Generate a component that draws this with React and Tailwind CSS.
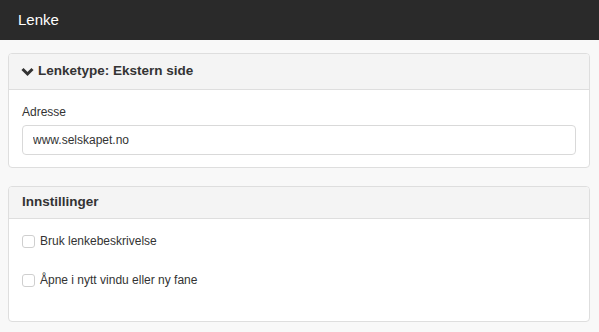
import React from "react";

export default function App() {
  return (
    <div className="min-h-[332px] bg-[#f8f8f8] text-[#333] font-['Liberation_Sans',Arial,sans-serif]">
      {/* Top bar */}
      <div className="h-[40px] bg-[#2a2a2a] flex items-center px-[18px]">
        <span className="text-white text-[15px]">Lenke</span>
      </div>

      <div className="px-[8px] pt-[13px] pr-[9px] flex flex-col gap-[18px]">
        {/* Link type panel */}
        <div className="bg-white border border-[#dedede] rounded-[4px] overflow-hidden">
          <div className="h-[36px] bg-[#f4f4f4] border-b border-[#dedede] flex items-center px-[12px] gap-[4px]">
            <svg width="13" height="10" viewBox="0 0 13 10" className="text-[#333]">
              <path d="M1.5 2 L6.5 7 L11.5 2" fill="none" stroke="currentColor" strokeWidth="3" />
            </svg>
            <span className="text-[13.5px] font-bold">Lenketype: Ekstern side</span>
          </div>
          <div className="px-[13px] pt-[14px] pb-[12px]">
            <div className="text-[12px] leading-[17px] mb-[4px]">Adresse</div>
            <input
              type="text"
              defaultValue="www.selskapet.no"
              className="w-full h-[30px] border border-[#d9d9d9] rounded-[4px] px-[10px] text-[12px] text-[#333] outline-none"
            />
          </div>
        </div>

        {/* Settings panel */}
        <div className="bg-white border border-[#dedede] rounded-[4px] overflow-hidden">
          <div className="h-[32px] bg-[#f4f4f4] border-b border-[#dedede] flex items-center px-[13px]">
            <span className="text-[13.5px] font-bold">Innstillinger</span>
          </div>
          <div className="px-[13px] pt-[14px] pb-[32px] flex flex-col gap-[22px]">
            <label className="flex items-center gap-[5px] text-[12px] leading-[17px]">
              <span className="w-[13px] h-[13px] border border-[#cfcfcf] rounded-[3px] bg-white" />
              Bruk lenkebeskrivelse
            </label>
            <label className="flex items-center gap-[5px] text-[12px] leading-[17px]">
              <span className="w-[13px] h-[13px] border border-[#cfcfcf] rounded-[3px] bg-white" />
              Åpne i nytt vindu eller ny fane
            </label>
          </div>
        </div>
      </div>
    </div>
  );
}
